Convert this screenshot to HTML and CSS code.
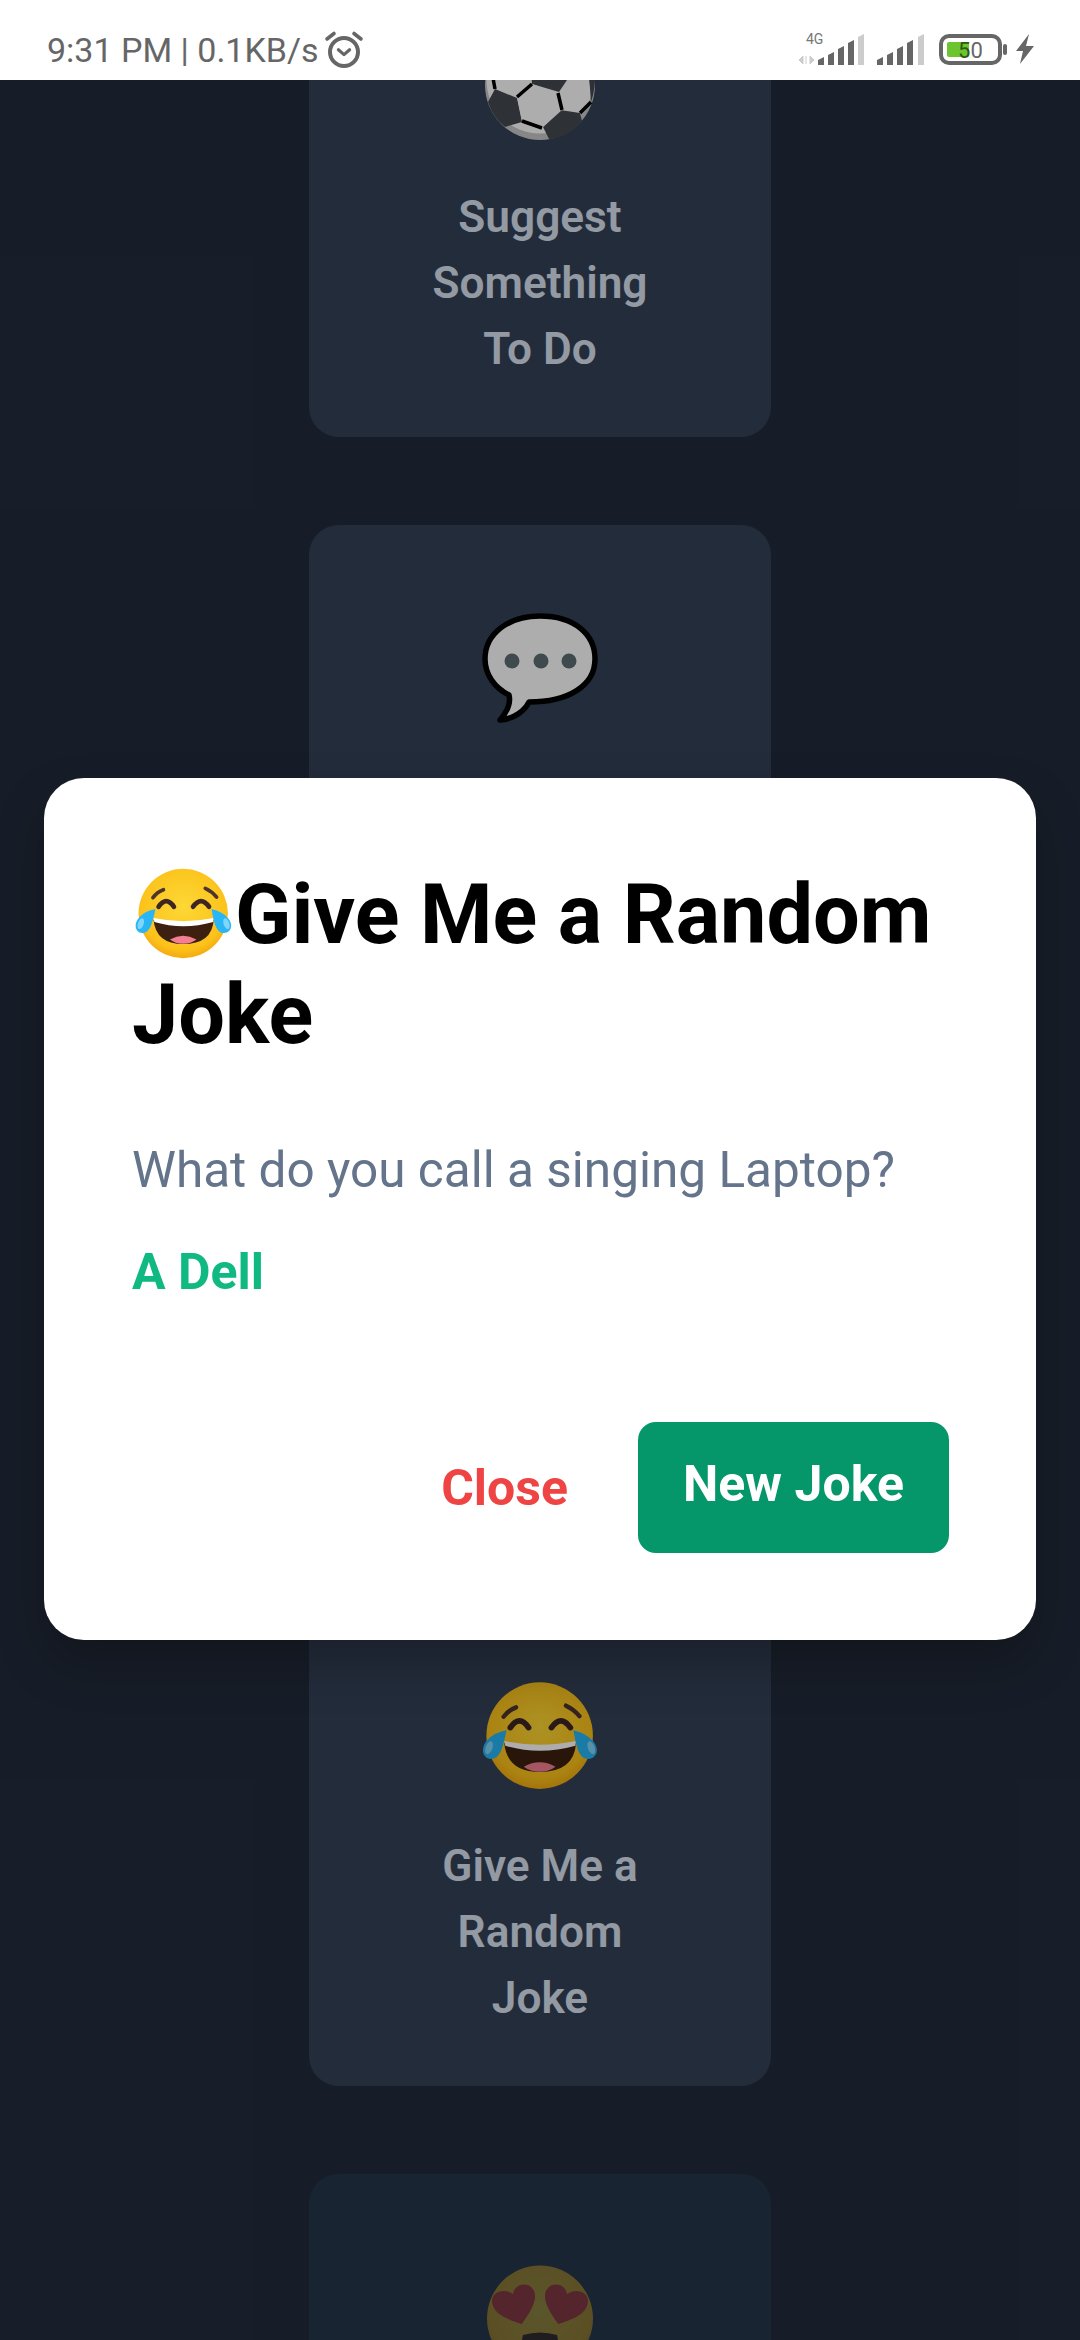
FILE: index.html
```html
<!DOCTYPE html>
<html lang="en">
<head>
<meta charset="utf-8">
<title>Give Me a Random Joke</title>
<link rel="stylesheet" href="styles.css">
</head>
<body>
<svg class="defs" width="0" height="0" aria-hidden="true">
  <defs>
    <radialGradient id="faceGrad" cx="50%" cy="42%" r="60%">
      <stop offset="0" stop-color="#fdd835"/>
      <stop offset=".8" stop-color="#fcc21b"/>
      <stop offset="1" stop-color="#f2a60f"/>
    </radialGradient>
    <symbol id="laugh" viewBox="60 60 362 330">
      <circle cx="240" cy="224" r="158" fill="url(#faceGrad)"/>
      <path d="M133 168Q148 148 170 140M318 135Q342 146 358 166" fill="none" stroke="#4e342e" stroke-width="13" stroke-linecap="round"/>
      <path d="M153 200Q180 160 207 200M275 200Q303 160 331 200" fill="none" stroke="#3e2723" stroke-width="17" stroke-linecap="round"/>
      <path d="M135 246Q240 268 348 246Q342 332 240 332Q143 332 135 246Z" fill="#3e2010"/>
      <path d="M135 240Q240 262 348 240L346 254Q240 284 138 254Z" fill="#fff"/>
      <path d="M193 316Q240 290 287 316Q268 331 240 331Q212 331 193 316Z" fill="#f47f92"/>
      <path d="M142 208Q105 214 84 238C62 264 72 293 96 293C126 293 132 250 142 208Z" fill="#29b6f6"/>
      <path d="M340 208Q378 216 398 240C420 266 408 293 384 293C354 293 348 250 340 208Z" fill="#29b6f6"/>
      <ellipse cx="90" cy="260" rx="10" ry="20" transform="rotate(20 90 260)" fill="#81d4fa"/>
      <ellipse cx="393" cy="260" rx="10" ry="20" transform="rotate(-20 393 260)" fill="#81d4fa"/>
    </symbol>
  </defs>
</svg>
<div class="screen">
  <header class="status">
    <div class="status-left">
      <span class="status-text">9:31 PM | 0.1KB/s</span>
      <svg class="alarm" viewBox="0 0 40 40" aria-hidden="true">
        <circle cx="20" cy="22" r="14" fill="none" stroke="#666" stroke-width="4"/>
        <path d="M13 21l7 6 7-6" transform="translate(4 3) scale(.8)" fill="none" stroke="#666" stroke-width="4" stroke-linecap="round" stroke-linejoin="round"/>
        <path d="M3 9L10 3.500M37 9L30 3.500" fill="none" stroke="#666" stroke-width="3.600" stroke-linecap="round"/>
      </svg>
    </div>
    <div class="status-right">
      <svg class="sig-a" viewBox="0 -6 68 38" aria-hidden="true">
        <text x="8" y="10" class="net-label">4G</text>
        <path d="M5 22v8l-4-4zM8 22v8M12 22v8l4-4z" fill="#ccc" stroke="#ccc" stroke-width="1"/>
        <path d="M20 26l6-3v8h-6zM30 21l6-3v13h-6zM40 15l6-3v19h-6zM50 9l6-3v25h-6z" fill="#666"/>
        <path d="M60 3l6-3v31h-6z" fill="#ccc"/>
      </svg>
      <svg class="sig-b" viewBox="0 0 48 32" aria-hidden="true">
        <path d="M0 26l6-3v8H0zM10 21l6-3v13h-6zM20 15l6-3v19h-6zM30 9l6-3v25h-6z" fill="#666"/>
        <path d="M41 3l6-3v31h-6z" fill="#ccc"/>
      </svg>
      <svg class="batt" viewBox="0 0 70 32" aria-hidden="true">
        <rect x="2" y="2" width="59" height="27" rx="8" fill="none" stroke="#666" stroke-width="4"/>
        <rect x="8" y="8" width="22" height="15" rx="2" fill="#6cc52e"/>
        <text x="19" y="24" class="batt-label"><tspan fill="#2d5a14">5</tspan>0</text>
        <rect x="64" y="10" width="4" height="11" rx="2" fill="#666"/>
      </svg>
      <svg class="bolt" viewBox="0 0 20 30" aria-hidden="true">
        <path d="M14 0L1 17h7L5 30 19 12h-8z" fill="#666"/>
      </svg>
    </div>
  </header>

  <main class="list">
    <article class="card">
      <svg class="card-emoji" viewBox="0 0 118 118" aria-hidden="true">
        <circle cx="59" cy="55" r="55" fill="#c8c8c8"/>
        <circle cx="59" cy="50" r="53.500" fill="#fff"/>
        <path d="M14 59L36 68L41 92L24 97Q12 88 7 72Z" fill="#45494f"/>
        <path d="M62 97L79 80L99 83L101 91Q92 103 79 107Q72 109 68 109Z" fill="#45494f"/>
        <path d="M50 40H86V50L78 62L51 54Z" fill="#45494f"/>
        <path d="M107 40H114Q115 58 110 72Q109 55 107 40Z" fill="#45494f"/>
        <path d="M36 67L51 54L77 63L81 80L61 98L41 91Z" fill="#fff"/>
        <path d="M36 67L51 54M77 63L81 80M41 91L61 98M99 83L110 72M12 48L14 59" fill="none" stroke="#000" stroke-width="3.500"/>
      </svg>
      <p class="card-label">Suggest<br>Something<br>To Do</p>
    </article>

    <article class="card">
      <svg class="card-emoji" viewBox="0 0 118 118" aria-hidden="true">
        <path d="M59 7C93 7 114 25 114 50C114 77 87 93 48 93C44 101 34 110 19 111C26 103 30 94 28 86C14 79 4 66 4 50C4 25 27 7 59 7Z" fill="#fff" stroke="#000" stroke-width="5.500" stroke-linejoin="round"/>
        <circle cx="31" cy="52" r="7.500" fill="#5d6e75"/>
        <circle cx="60" cy="52" r="7.500" fill="#5d6e75"/>
        <circle cx="88" cy="52" r="7.500" fill="#5d6e75"/>
      </svg>
    </article>

    <article class="card card-short"></article>

    <article class="card">
      <svg class="card-emoji" viewBox="6 -4 350 350" aria-hidden="true"><use href="#laugh" width="362" height="330"/></svg>
      <p class="card-label">Give Me a<br>Random<br>Joke</p>
    </article>

    <article class="card card-fading">
      <svg class="card-emoji" viewBox="0 0 118 118" aria-hidden="true">
        <circle cx="59" cy="60.500" r="53" fill="url(#faceGrad)"/>
        <path d="M40.700 66C28 62 11 56 11 43C11 33 24 30 32 36C33 27 44 24 50 29C58 36 54 48 40.700 66ZM77.300 66C90 62 107 56 107 43C107 33 94 30 86 36C85 27 74 24 68 29C60 36 64 48 77.300 66Z" fill="#e53935"/>
        <path d="M42 77Q59 72 76 77Q82 100 59 104Q36 100 42 77Z" fill="#3e2010"/>
      </svg>
    </article>
  </main>

  <div class="scrim"></div>

  <section class="modal" role="dialog">
    <h1 class="modal-title"><svg class="title-emoji" viewBox="6 -4 350 350" aria-hidden="true"><use href="#laugh" width="362" height="330"/></svg>Give Me a Random Joke</h1>
    <p class="modal-question">What do you call a singing Laptop?</p>
    <p class="modal-answer">A Dell</p>
    <div class="modal-actions">
      <button class="btn-close" type="button">Close</button>
      <button class="btn-new" type="button">New Joke</button>
    </div>
  </section>
</div>
</body>
</html>
```
FILE: styles.css
```css
* { box-sizing: border-box; }
html, body { margin: 0; padding: 0; }
body { font-family: Roboto, "Noto Sans", sans-serif; background: #222c3c; }
.defs { position: absolute; }

.screen {
  position: relative;
  width: 1080px;
  height: 2340px;
  overflow: hidden;
  background: #222c3c;
  display: flex;
  flex-direction: column;
}

/* Status bar */
.status {
  position: relative;
  z-index: 3;
  flex: none;
  height: 80px;
  background: #fff;
  display: flex;
  justify-content: space-between;
  align-items: flex-start;
  padding: 28px 45px 0 47px;
}
.status-left { display: flex; align-items: center; gap: 5px; }
.status-text { font-size: 34px; line-height: 44px; color: #666; }
.alarm { width: 40px; height: 40px; }
.status-right { display: flex; align-items: flex-start; margin-top: 6px; }
.sig-a { width: 68px; height: 38px; margin-top: -6px; }
.sig-b { width: 48px; height: 32px; margin-left: 11px; }
.batt { width: 70px; height: 32px; margin-left: 14px; }
.bolt { width: 20px; height: 30px; margin-left: 6px; }
.net-label { font-size: 14px; fill: #777; }
.batt-label { font-size: 22px; fill: #666; }

/* Card list */
.list {
  flex: none;
  margin-top: -134px;
  display: flex;
  flex-direction: column;
  align-items: center;
  gap: 88px;
}
.card {
  flex: none;
  width: 462px;
  min-height: 491px;
  border-radius: 30px;
  background: #344157;
  padding: 84px 0 52px;
  display: flex;
  flex-direction: column;
  align-items: center;
}
.card-short { min-height: 403px; }
.card-fading { background: #26364c; }
.card-fading .card-emoji { opacity: .45; }
.card-emoji { flex: none; display: block; width: 118px; height: 118px; }
.card-label {
  margin: 36px 0 0;
  text-align: center;
  font-size: 44.200px;
  line-height: 66px;
  font-weight: 600;
  color: #dbe3f0;
}

.scrim {
  position: absolute;
  inset: 0;
  z-index: 1;
  background: rgba(0, 0, 0, .32);
}

/* Dialog */
.modal {
  position: absolute;
  z-index: 2;
  left: 44px;
  top: 778px;
  width: 992px;
  height: 862px;
  background: #fff;
  border-radius: 40px;
  padding: 87px 87px 87px 88px;
  box-shadow: 0 24px 48px rgba(0, 0, 0, .25);
  display: flex;
  flex-direction: column;
}
.modal-title {
  margin: 0;
  font-size: 82.800px;
  line-height: 100px;
  font-weight: 700;
  color: #000;
}
.title-emoji {
  display: inline-block;
  width: 99px;
  height: 99px;
  margin: 0 2px 0 2px;
  vertical-align: -22px;
}
.modal-question {
  margin: 68px 0 0;
  font-size: 49.500px;
  line-height: 75px;
  color: #64748b;
}
.modal-answer {
  margin: 27px 0 0;
  font-size: 50px;
  line-height: 75px;
  font-weight: 700;
  color: #10b981;
}
.modal-actions {
  margin-top: auto;
  display: flex;
  justify-content: flex-end;
  align-items: center;
  gap: 70px;
}
.btn-close, .btn-new {
  font-family: inherit;
  font-weight: 700;
  border: 0;
  padding: 0;
}
.btn-close {
  background: none;
  color: #ef4444;
  font-size: 50px;
}
.btn-new {
  width: 311px;
  height: 131px;
  border-radius: 18px;
  background: #059669;
  color: #fff;
  font-size: 50px;
  padding-bottom: 8px;
}
```
